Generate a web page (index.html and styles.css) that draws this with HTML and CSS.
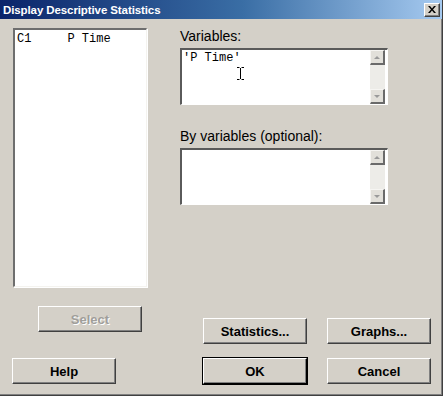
FILE: index.html
```html
<!DOCTYPE html>
<html>
    <head>
        <meta charset="utf-8" />
        <title>Display Descriptive Statistics</title>
        <link rel="stylesheet" href="styles.css">
    </head>

    <body>
        <div class="window">
            <div class="titlebar">
                <span class="title">Display Descriptive Statistics</span>
                <span class="close">
                    <svg width="8" height="7" viewBox="0 0 8 7">
                        <path d="M0 0h2l2 2.5L6 0h2L5 3.5 8 7H6L4 4.5 2 7H0l3-3.5z" fill="#000" />
                    </svg>
                </span>
            </div>

            <div class="top">
                <div class="listbox">C1     P Time</div>
                <div class="fields">
                    <label class="field">
                        <span class="label">Variables:</span>
                        <div class="textbox">
                            <div class="text">'P Time'</div>
                            <div class="scroll">
                                <span class="arrow up"></span>
                                <span class="arrow down"></span>
                            </div>
                            <svg class="ibeam" width="7" height="13" viewBox="0 0 7 13">
                                <path d="M0 0.5h2.5M4.5 0.5H7M3.5 1v11M0 12.5h2.5M4.5 12.5H7" stroke="#000" stroke-width="1" fill="none" />
                            </svg>
                        </div>
                    </label>
                    <label class="field second">
                        <span class="label">By variables (optional):</span>
                        <div class="textbox">
                            <div class="text"></div>
                            <div class="scroll">
                                <span class="arrow up"></span>
                                <span class="arrow down"></span>
                            </div>
                        </div>
                    </label>
                </div>
            </div>

            <div class="middle">
                <button class="btn select" disabled>Select</button>
                <button class="btn stats">Statistics...</button>
                <button class="btn graphs">Graphs...</button>
            </div>

            <div class="bottom">
                <button class="btn help">Help</button>
                <button class="btn ok">OK</button>
                <button class="btn cancel">Cancel</button>
            </div>
        </div>
    </body>
</html>
```

FILE: styles.css
```css
body {
    margin: 0;
    background: #d4d0c8;
    font-family: "Liberation Sans", Arial, sans-serif;
}

.window {
    box-sizing: border-box;
    width: 443px;
    height: 396px;
    background: #d4d0c8;
    border-right: 1px solid #404040;
    border-bottom: 1px solid #404040;
    box-shadow: inset -1px -1px 0 #808080;
}

.titlebar {
    height: 19px;
    display: flex;
    align-items: center;
    justify-content: space-between;
    padding: 0 2px 0 3px;
    background: linear-gradient(to right, #0a246a, #3a6ea5 55%, #a6caf0);
}

.title {
    color: #fff;
    font-weight: bold;
    font-size: 11.5px;
    letter-spacing: -0.1px;
}

.close {
    box-sizing: border-box;
    width: 16px;
    height: 14px;
    display: flex;
    align-items: center;
    justify-content: center;
    background: #d4d0c8;
    border-top: 1px solid #fff;
    border-left: 1px solid #fff;
    border-right: 1px solid #404040;
    border-bottom: 1px solid #404040;
    box-shadow: inset -1px -1px 0 #808080;
}

.top {
    display: flex;
    padding: 9px 0 0 13px;
    height: 259px;
}

.listbox {
    box-sizing: border-box;
    width: 134px;
    height: 259px;
    background: #fff;
    border-top: 2px solid #6e6e6e;
    border-left: 2px solid #6e6e6e;
    border-right: 1px solid #f4f3ef;
    border-bottom: 1px solid #f4f3ef;
    box-shadow: 1px 1px 0 #fff;
    padding: 2px 0 0 2px;
    white-space: pre;
    font-family: "Liberation Mono", "Courier New", monospace;
    font-size: 12px;
    color: #000;
}

.fields {
    display: flex;
    flex-direction: column;
    margin-left: 33px;
}

.field {
    display: flex;
    flex-direction: column;
    gap: 4px;
}

.field.second {
    margin-top: 23px;
}

.label {
    font-size: 14px;
    line-height: 16px;
    color: #000;
}

.textbox {
    position: relative;
    box-sizing: border-box;
    width: 208px;
    height: 57px;
    display: flex;
    background: #fff;
    border-top: 2px solid #5a5a5a;
    border-left: 2px solid #5a5a5a;
    border-right: 1px solid #fff;
    border-bottom: 1px solid #fff;
}

.text {
    flex: 1;
    padding: 1px 0 0 1px;
    white-space: pre;
    font-family: "Liberation Mono", "Courier New", monospace;
    font-size: 12px;
}

.scroll {
    width: 15px;
    margin: 0 2px 0 0;
    display: flex;
    flex-direction: column;
    justify-content: space-between;
    background: #edece8;
}

.arrow {
    box-sizing: border-box;
    width: 15px;
    height: 15px;
    display: flex;
    align-items: center;
    justify-content: center;
    background: #e2e0da;
    border-top: 1px solid #f6f5f2;
    border-left: 1px solid #f6f5f2;
    border-right: 2px solid #6a6a6a;
    border-bottom: 2px solid #6a6a6a;
}

.arrow::after {
    content: "";
    width: 0;
    height: 0;
    border-left: 3px solid transparent;
    border-right: 3px solid transparent;
}

.arrow.up::after {
    border-bottom: 3px solid #9a9a9a;
}

.arrow.down::after {
    border-top: 3px solid #9a9a9a;
}

.ibeam {
    position: absolute;
    left: 55px;
    top: 17px;
}

.middle {
    display: flex;
    align-items: flex-start;
    padding-left: 38px;
    margin-top: 19px;
}

.bottom {
    display: flex;
    padding-left: 12px;
    margin-top: 14px;
}

.btn {
    box-sizing: border-box;
    width: 104px;
    height: 26px;
    padding: 0;
    background: #d4d0c8;
    font-family: "Liberation Sans", Arial, sans-serif;
    font-weight: bold;
    font-size: 13px;
    color: #000;
    border-top: 1px solid #fff;
    border-left: 1px solid #fff;
    border-right: 1px solid #404040;
    border-bottom: 1px solid #404040;
    box-shadow: inset -1px -1px 0 #808080;
}

.btn.select {
    color: #a09e9a;
    text-shadow: 1px 1px 0 #fff;
}

.btn.stats {
    margin: 12px 0 0 61px;
}

.btn.graphs {
    margin: 12px 0 0 20px;
}

.btn.ok {
    margin-left: 87px;
    outline: 1px solid #000;
    outline-offset: 0;
    border-right-color: #000;
    border-bottom-color: #000;
}

.btn.cancel {
    margin-left: 20px;
}
```
